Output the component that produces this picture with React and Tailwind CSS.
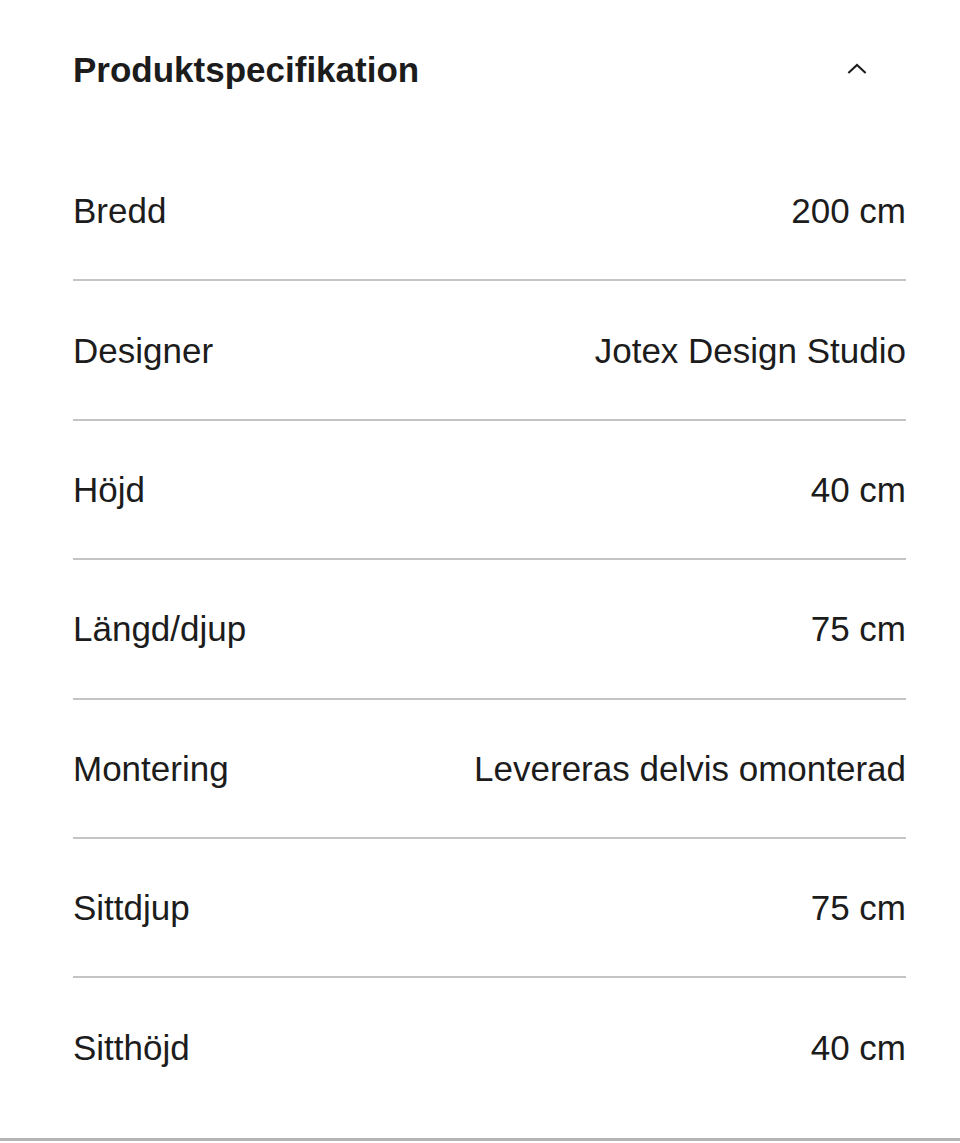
import React from 'react';

const specs = [
  { label: 'Bredd', value: '200 cm' },
  { label: 'Designer', value: 'Jotex Design Studio' },
  { label: 'Höjd', value: '40 cm' },
  { label: 'Längd/djup', value: '75 cm' },
  { label: 'Montering', value: 'Levereras delvis omonterad' },
  { label: 'Sittdjup', value: '75 cm' },
  { label: 'Sitthöjd', value: '40 cm' },
];

export default function App() {
  return (
    <div
      className="w-[960px] bg-white text-[#1c1c1c] pb-[21px] border-b-[3px] border-[#b5b5b5]"
      style={{ fontFamily: '"Liberation Sans", Arial, sans-serif' }}
    >
      <div className="pl-[73px] pr-[54px]">
        {/* Header */}
        <div className="h-[142px] pb-1 flex items-center justify-between">
          <h2 className="text-[35px] font-bold leading-none">Produktspecifikation</h2>
          <button className="mr-[39px] w-5 h-5 flex items-center justify-center">
            <svg width="22" height="12" viewBox="0 0 22 12" fill="none">
              <polyline points="1.5,10.5 11,1.5 20.5,10.5" stroke="#1c1c1c" strokeWidth="2.2" />
            </svg>
          </button>
        </div>

        {/* Rows */}
        {specs.map((s, i) => (
          <div
            key={s.label}
            className={
              i < specs.length - 1
                ? 'h-[139.4px] flex items-center justify-between border-b-2 border-[#c4c4c4]'
                : 'h-[139px] flex items-center justify-between'
            }
          >
            <span className="text-[35px] leading-none">{s.label}</span>
            <span className="text-[35px] leading-none">{s.value}</span>
          </div>
        ))}
      </div>
    </div>
  );
}
